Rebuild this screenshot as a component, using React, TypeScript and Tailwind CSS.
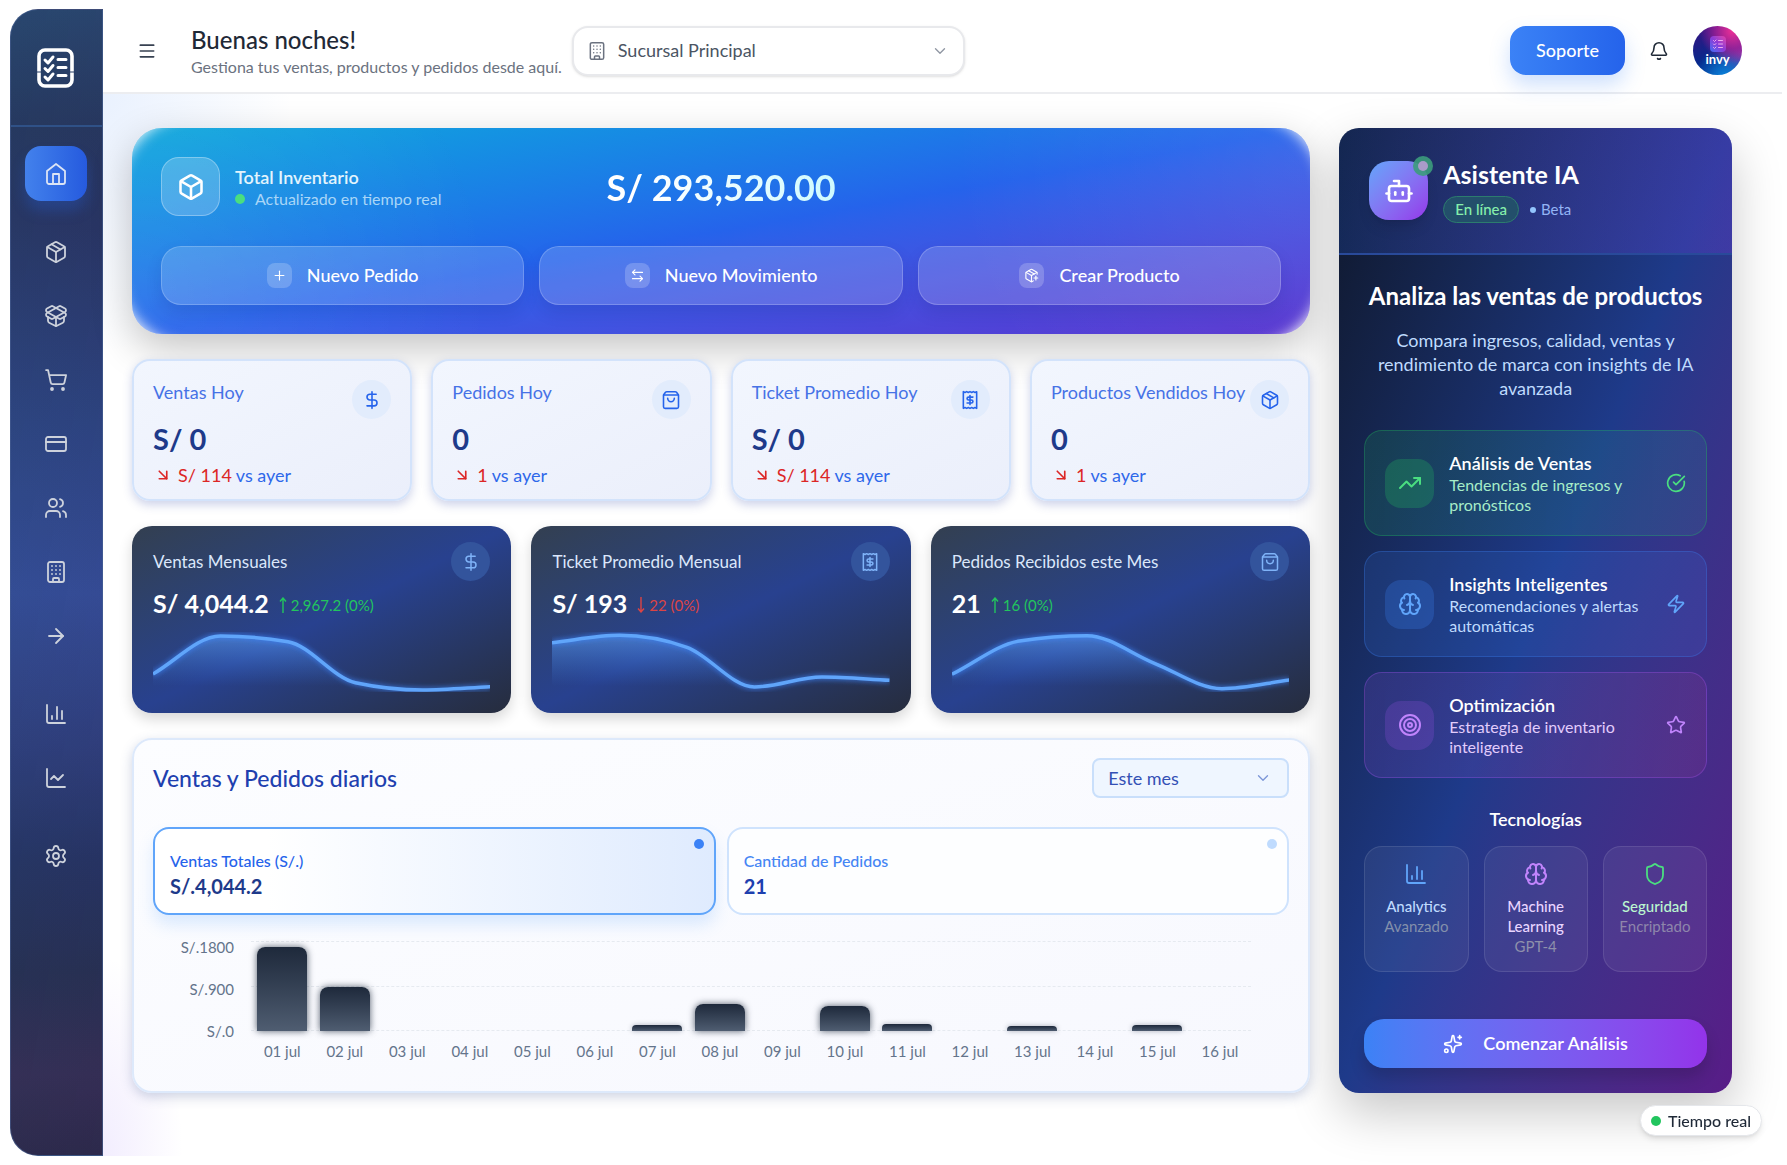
import React, { useState } from 'react';
import {
  ArrowDownRight, ArrowLeftRight, ArrowRight, Bell, Bot, Box, Brain, Building, ChartColumn, ChartLine,
  ChevronDown, CircleCheckBig, CreditCard, DollarSign, Menu, Package, PackageOpen, PackagePlus, Plus,
  Settings, Shield, ShoppingBag, ShoppingCart, Sparkles, Star, Target, TrendingUp, Users, Zap,
} from 'lucide-react';

type Icon = React.ComponentType<{ className?: string; strokeWidth?: number }>;

function HomeIcon({ className = '', strokeWidth = 2 }: { className?: string; strokeWidth?: number }) {
  return (
    <svg viewBox="0 0 24 24" className={className} fill="none" stroke="currentColor" strokeWidth={strokeWidth} strokeLinecap="round" strokeLinejoin="round">
      <path d="m3 9 9-7 9 7v11a2 2 0 0 1-2 2H5a2 2 0 0 1-2-2z" />
      <path d="M9 22V12h6v10" />
    </svg>
  );
}

function ReceiptIcon({ className = '', strokeWidth = 2 }: { className?: string; strokeWidth?: number }) {
  return (
    <svg viewBox="0 0 24 24" className={className} fill="none" stroke="currentColor" strokeWidth={strokeWidth} strokeLinecap="round" strokeLinejoin="round">
      <path d="M4 2v20l2-1 2 1 2-1 2 1 2-1 2 1 2-1 2 1V2l-2 1-2-1-2 1-2-1-2 1-2-1-2 1z" />
      <path d="M15.5 8.500h-5a2 1.700 0 0 0 0 3.500h3a2 1.700 0 0 1 0 3.500h-5" />
      <path d="M12 6.500v11" />
    </svg>
  );
}

function Checklist({ className = '' }: { className?: string }) {
  return (
    <svg viewBox="0 0 37 40" className={className} fill="none" stroke="currentColor" strokeLinecap="round" strokeLinejoin="round">
      <path d="M2 23.500V8a6 6 0 0 1 6-6h21a6 6 0 0 1 6 6v15.500M2 24.500v7.500a6 6 0 0 0 6 6h21a6 6 0 0 0 6-6v-7.500" strokeWidth="3.600" strokeLinecap="butt" />
      <path d="m8 12 3 3 5-6M8 20.500l3 3 5-6M8 29l3 3 5-6" strokeWidth="3" />
      <path d="M21 11.500h8M21 19.500h8M21 27.500h8" strokeWidth="3" />
    </svg>
  );
}

const navGroups: { label: string; icon: Icon }[][] = [
  [{ label: 'Inicio', icon: HomeIcon }],
  [
    { label: 'Productos', icon: Package },
    { label: 'Inventario', icon: PackageOpen },
    { label: 'Ventas', icon: ShoppingCart },
    { label: 'Pagos', icon: CreditCard },
    { label: 'Clientes', icon: Users },
    { label: 'Sucursales', icon: Building },
    { label: 'Movimientos', icon: ArrowRight },
  ],
  [
    { label: 'Reportes', icon: ChartColumn },
    { label: 'Tendencias', icon: ChartLine },
  ],
  [{ label: 'Ajustes', icon: Settings }],
];

function Sidebar() {
  return (
    <aside className="flex w-[93px] shrink-0 flex-col rounded-l-[28px] border border-[#4a6394]/60 bg-[linear-gradient(100deg,rgba(40,90,130,0.15),rgba(50,30,110,0.10)),linear-gradient(180deg,#29436b_0%,#26345a_10%,#28325f_18%,#2d4380_36%,#354d98_51%,#2f3f7c_64%,#253461_74%,#26304f_84%,#352f52_93%,#2c2a47_100%)]">
      <div className="flex h-[117px] items-center justify-center border-b-2 border-[#2f5187] pr-[2px]">
        <Checklist className="h-10 w-[37px] text-white" />
      </div>
      <nav className="flex flex-col gap-[23px] pt-[19px] pr-[2px]">
        {navGroups.map((group, g) => (
          <div key={g} className="flex flex-col items-center gap-[9px]">
            {group.map(({ label, icon: I }) => (
              <a
                key={label}
                href="#"
                aria-label={label}
                className={
                  label === 'Inicio'
                    ? 'flex h-[55px] w-[62px] items-center justify-center rounded-2xl bg-linear-to-r from-[#4381ec] to-[#265ade] text-[#dbe4f5] shadow-[0_10px_14px_rgba(37,99,235,0.28)]'
                    : 'flex h-[55px] w-[62px] items-center justify-center rounded-2xl text-[#cdd2dc]'
                }
              >
                <I className="size-6" strokeWidth={1.8} />
              </a>
            ))}
          </div>
        ))}
      </nav>
    </aside>
  );
}

function Header() {
  return (
    <header className="flex h-[85px] items-center border-b-2 border-[#ecedf0] bg-white">
      <button aria-label="Abrir menú" className="ml-[34px] flex size-5 items-center justify-center text-[#374151]">
        <Menu className="size-5" strokeWidth={2} />
      </button>
      <div className="ml-[34px] whitespace-nowrap">
        <h1 className="text-[24px] leading-[30px] font-medium text-[#1f2937]">Buenas noches!</h1>
        <p className="mt-[2px] text-[16px] leading-5 text-[#6b7280]">Gestiona tus ventas, productos y pedidos desde aquí.</p>
      </div>
      <div className="relative ml-[10px] w-[393px]">
        <Building className="pointer-events-none absolute top-[15px] left-[15px] size-5 text-[#6b7280]" strokeWidth={1.8} />
        <select aria-label="Sucursal" className="h-[50px] w-full appearance-none rounded-2xl border-2 border-[#e8e9ec] bg-white pr-11 pl-11 text-[18px] text-[#4b5563] shadow-sm">
          <option>Sucursal Principal</option>
        </select>
        <ChevronDown className="pointer-events-none absolute top-4 right-4 size-[18px] text-[#9097a3]" strokeWidth={1.8} />
      </div>
      <div className="mr-10 ml-auto flex items-center">
        <button className="h-[49px] rounded-2xl bg-linear-to-r from-[#3b82f6] to-[#2563eb] px-[26px] text-[18px] font-medium text-white shadow-[0_10px_20px_rgba(59,130,246,0.25)]">Soporte</button>
        <button aria-label="Notificaciones" className="ml-6 text-[#1f2937]">
          <Bell className="size-5" strokeWidth={1.9} />
        </button>
        <button aria-label="Cuenta invy" className="ml-6 flex size-[49px] flex-col items-center justify-center rounded-full bg-[radial-gradient(circle_at_80%_10%,#ec2f97_0%,rgba(160,30,150,0.8)_30%,transparent_55%),radial-gradient(circle_at_65%_105%,#0b86dd_0%,transparent_50%),radial-gradient(circle_at_100%_55%,#8b3cb0_0%,transparent_45%),linear-gradient(160deg,#3a1180,#062a8c_60%,#063a9a)]">
          <span className="flex size-4 items-center justify-center rounded bg-linear-to-tr from-[#2f6bf5] via-[#8a3ad8] to-[#e63aa8]">
            <svg viewBox="0 0 12 12" className="size-3" fill="none" stroke="#f0a8ee" strokeLinecap="round" aria-hidden="true">
              <path d="m1.500 2.500 1 1L4 2M1.500 6l1 1L4 5.500M1.500 9.500l1 1L4 9M6.500 2.500h4M6.500 6h4M6.500 9.500h4" />
            </svg>
          </span>
          <span className="text-[13px] leading-[14px] font-bold text-white">invy</span>
        </button>
      </div>
    </header>
  );
}

const heroActions: { label: string; icon: Icon }[] = [
  { label: 'Nuevo Pedido', icon: Plus },
  { label: 'Nuevo Movimiento', icon: ArrowLeftRight },
  { label: 'Crear Producto', icon: PackagePlus },
];

function Hero() {
  return (
    <section className="rounded-[30px] shadow-[0_14px_40px_rgba(0,0,0,0.24)]">
      <div className="relative overflow-hidden rounded-[30px] bg-linear-to-br from-[#12a8dc] via-[#2563eb] to-[#5733cf] p-[29px]">
        <div className="pointer-events-none absolute inset-0 bg-[radial-gradient(circle_at_0_80%,rgba(255,255,255,0.08),transparent_30%),radial-gradient(circle_at_100%_10%,rgba(255,255,255,0.07),transparent_30%)]" />
        <div className="pointer-events-none absolute -inset-4 rounded-[82px] shadow-[inset_0_0_14px_2px_rgba(255,255,255,0.9)]" />
        <div className="relative grid grid-cols-3 items-center gap-[15px]">
          <div className="flex items-center gap-[15px]">
            <div className="flex size-[59px] shrink-0 items-center justify-center rounded-[18px] border border-white/30 bg-white/20 text-white">
              <Box className="size-7" strokeWidth={2.2} />
            </div>
            <div className="whitespace-nowrap">
              <h2 className="text-[18px] leading-6 font-semibold text-[#e3f4fd]">Total Inventario</h2>
              <p className="flex items-center gap-[10px] text-[16px] leading-5 text-[#a9d6f7]">
                <span className="size-[10px] rounded-full bg-[#4ade80]" />
                Actualizado en tiempo real
              </p>
            </div>
          </div>
          <p className="bg-linear-to-r from-white from-30% to-[#cffafe] to-80% bg-clip-text text-center text-[36px] leading-[48px] font-bold whitespace-nowrap text-transparent">
            S/ 293,520.00
          </p>
        </div>
        <div className="relative mt-[30px] grid grid-cols-3 gap-[15px]">
          {heroActions.map(({ label, icon: I }) => (
            <button key={label} className="flex h-[59px] items-center justify-center gap-[15px] rounded-[20px] border border-white/20 bg-white/16 text-[18px] font-medium text-white shadow-[0_8px_16px_rgba(20,30,120,0.14)]">
              <span className="flex size-[25px] items-center justify-center rounded-lg bg-white/20">
                <I className="size-[15px]" strokeWidth={1.8} />
              </span>
              {label}
            </button>
          ))}
        </div>
      </div>
    </section>
  );
}

const todayStats: { title: string; value: string; delta: string; icon: Icon }[] = [
  { title: 'Ventas Hoy', value: 'S/ 0', delta: 'S/ 114', icon: DollarSign },
  { title: 'Pedidos Hoy', value: '0', delta: '1', icon: ShoppingBag },
  { title: 'Ticket Promedio Hoy', value: 'S/ 0', delta: 'S/ 114', icon: ReceiptIcon },
  { title: 'Productos Vendidos Hoy', value: '0', delta: '1', icon: Package },
];

function TodayStats() {
  return (
    <section className="relative grid grid-cols-4 gap-[19px]">
      {todayStats.map(({ title, value, delta, icon: I }) => (
        <article key={title} className="rounded-[18px] border-2 border-[#d3e3fb] bg-linear-to-br from-[#f2f6fe] to-[#ebeffb] px-[19px] pt-[19px] pb-3 shadow-[0_4px_10px_rgba(60,80,170,0.25)]">
          <div className="flex items-start justify-between">
            <h3 className="text-[18px] leading-6 whitespace-nowrap text-[#4672e6]">{title}</h3>
            <span className="flex size-[39px] shrink-0 items-center justify-center rounded-full bg-[#e2ecfc] text-[#2563eb]">
              <I className="size-5" strokeWidth={1.9} />
            </span>
          </div>
          <p className="mt-[2px] text-[29px] leading-9 font-bold text-[#1e3a8a]">{value}</p>
          <p className="mt-[6px] flex items-center text-[18px] leading-6 text-[#2f68ea]">
            <ArrowDownRight className="mr-[6px] ml-[1px] size-[18px] text-[#dc2626]" strokeWidth={2.2} />
            <span className="mr-1 text-[#dc2626]">{delta}</span>
            vs ayer
          </p>
        </article>
      ))}
    </section>
  );
}

function monotonePath(values: number[], width: number) {
  const n = values.length;
  const h = width / (n - 1);
  const slopes = values.slice(1).map((v, i) => (v - values[i]) / h);
  const tangents = values.map((_, i) => {
    if (i === 0) return slopes[0];
    if (i === n - 1) return slopes[n - 2];
    const a = slopes[i - 1];
    const b = slopes[i];
    if (a * b <= 0) return 0;
    return Math.sign(a) * Math.min(Math.abs(a), Math.abs(b), Math.abs(a + b) / 4) * 2;
  });
  let d = `M0 ${values[0]}`;
  for (let i = 0; i < n - 1; i++) {
    const x = i * h;
    d += ` C${x + h / 3} ${values[i] + (tangents[i] * h) / 3} ${x + (2 * h) / 3} ${values[i + 1] - (tangents[i + 1] * h) / 3} ${x + h} ${values[i + 1]}`;
  }
  return d;
}

function Sparkline({ id, values }: { id: string; values: number[] }) {
  const d = monotonePath(values, 338);
  return (
    <svg viewBox="0 0 338 60" preserveAspectRatio="none" className="mt-3 h-[60px] w-full overflow-hidden" aria-hidden="true">
      <defs>
        <linearGradient id={`${id}-fill`} x1="0" y1="0" x2="0" y2="60" gradientUnits="userSpaceOnUse">
          <stop offset="0" stopColor="#60a5fa" stopOpacity="0.6" />
          <stop offset="0.9" stopColor="#3b82f6" stopOpacity="0" />
        </linearGradient>
        <filter id={`${id}-glow`} x="-5%" y="-30%" width="110%" height="160%">
          <feGaussianBlur stdDeviation="2.500" />
        </filter>
      </defs>
      <path d={`${d} L338 60 L0 60 Z`} fill={`url(#${id}-fill)`} />
      <path d={d} fill="none" stroke="#3b82f6" strokeWidth="5" strokeOpacity="0.7" filter={`url(#${id}-glow)`} />
      <path d={d} fill="none" stroke="#60a5fa" strokeWidth="3.500" />
    </svg>
  );
}

const monthly: { title: string; value: string; up: boolean; delta: string; icon: Icon; points: number[] }[] = [
  { title: 'Ventas Mensuales', value: 'S/ 4,044.2', up: true, delta: '2,967.2 (0%)', icon: DollarSign, points: [42, 4, 9.7, 50.7, 58, 54.7] },
  { title: 'Ticket Promedio Mensual', value: 'S/ 193', up: false, delta: '22 (0%)', icon: ReceiptIcon, points: [10.7, 3.3, 15.3, 55, 45, 48.3] },
  { title: 'Pedidos Recibidos este Mes', value: '21', up: true, delta: '16 (0%)', icon: ShoppingBag, points: [42.3, 9, 3.7, 31.3, 56.7, 48] },
];

function MonthlyStats() {
  return (
    <section className="relative grid grid-cols-3 gap-[20px]">
      {monthly.map(({ title, value, up, delta, icon: I, points }, i) => (
        <article key={title} className="rounded-[20px] bg-linear-to-br from-[#333f50] via-[#28418f] to-[#262c3d] px-[21px] pt-4 pb-[21px] shadow-[0_6px_14px_rgba(0,0,0,0.16)]">
          <div className="flex items-center justify-between">
            <h3 className="text-[17px] leading-6 whitespace-nowrap text-[#dbe7fb]">{title}</h3>
            <span className="flex size-[39px] items-center justify-center rounded-full bg-[#33549c] text-[#7fb3f8]">
              <I className="size-5" strokeWidth={1.8} />
            </span>
          </div>
          <div className="mt-[5px] flex h-[34px] items-center gap-[10px]">
            <span className="text-[25px] leading-8 font-bold text-white">{value}</span>
            <span className={up ? 'flex items-center gap-1 pt-1 text-[15px] leading-6 text-[#22c55e]' : 'flex items-center gap-1 pt-1 text-[15px] leading-6 text-[#dc4444]'}>
              <svg viewBox="0 0 8 16" className="h-4 w-2" fill="none" stroke="currentColor" strokeWidth="1.400" aria-hidden="true">
                <path d={up ? 'M4 16V1M1 4.500 4 1l3 3.500' : 'M4 0v15M1 11.500 4 15l3-3.500'} />
              </svg>
              {delta}
            </span>
          </div>
          <Sparkline id={`spark-${i}`} values={points} />
        </article>
      ))}
    </section>
  );
}

const bars = [84, 44, 0, 0, 0, 0, 6, 27, 0, 25, 7, 0, 5, 0, 6, 0];

function DailyChart() {
  const [tab, setTab] = useState(0);
  const tabs = [
    { label: 'Ventas Totales (S/.)', value: 'S/.4,044.2' },
    { label: 'Cantidad de Pedidos', value: '21' },
  ];
  return (
    <section className="relative flex-1 rounded-[20px] border-2 border-[#dde9fb] bg-linear-to-br from-[#fcfdff] to-[#f7f8fe] px-[19px] pt-[18px] pb-[30px] shadow-[0_4px_12px_rgba(60,80,140,0.25)]">
      <div className="flex items-center justify-between">
        <h2 className="text-[23px] leading-[38px] font-medium text-[#1e40af]">Ventas y Pedidos diarios</h2>
        <div className="relative w-[197px]">
          <select aria-label="Periodo" className="h-10 w-full appearance-none rounded-lg border-2 border-[#c9dffb] bg-[#eff6ff] px-[14px] text-[18px] text-[#3350b5]">
            <option>Este mes</option>
          </select>
          <ChevronDown className="pointer-events-none absolute top-[11px] right-[17px] size-[18px] text-[#7d97d8]" strokeWidth={1.8} />
        </div>
      </div>
      <div className="mt-[29px] grid grid-cols-2 gap-[11px]">
        {tabs.map((t, i) => (
          <button
            key={t.label}
            onClick={() => setTab(i)}
            className={
              i === tab
                ? 'relative h-[88px] rounded-2xl border-2 border-[#60a5fa] bg-linear-to-r from-white from-20% to-[#dfebfe] px-[15px] pt-[5px] text-left shadow-[0_10px_16px_rgba(96,165,250,0.20)]'
                : 'relative h-[88px] rounded-2xl border-2 border-[#cfe3fd] bg-[#fdfeff] px-[15px] pt-[5px] text-left'
            }
          >
            <span className={i === tab ? 'absolute top-[10px] right-[10px] size-[10px] rounded-full bg-[#3b82f6]' : 'absolute top-[10px] right-[10px] size-[10px] rounded-full bg-[#bfdbfe]'} />
            <span className={i === tab ? 'block text-[16px] leading-6 font-medium text-[#2563eb]' : 'block text-[16px] leading-6 font-medium text-[#4585f4]'}>{t.label}</span>
            <span className={i === tab ? 'block text-[20px] leading-[26px] font-bold text-[#1e3a8a]' : 'block text-[20px] leading-[26px] font-bold text-[#1e40af]'}>{t.value}</span>
          </button>
        ))}
      </div>
      <div className="mt-[22px] flex pr-[38px] text-[15px] leading-5 text-[#64748b]">
        <div className="flex h-[104px] w-[81px] shrink-0 flex-col justify-between text-right">
          <span>S/.1800</span>
          <span>S/.900</span>
          <span>S/.0</span>
        </div>
        <div className="ml-[17px] flex-1 pt-1">
          <div className="relative h-[90px]">
            <div className="absolute inset-0 flex flex-col justify-between">
              <i className="block border-t border-dashed border-[#e6eaf0]" />
              <i className="block border-t border-dashed border-[#e6eaf0]" />
              <i className="block border-t border-dashed border-[#e6eaf0]" />
            </div>
            <div className="relative flex h-full items-end">
              {bars.map((h, i) => (
                <div key={i} className="flex flex-1 justify-center">
                  {h > 0 && (
                    <div
                      className={
                        h > 20
                          ? 'w-4/5 rounded-t-lg bg-linear-to-b from-[#1e293b] to-[#4f5d71] shadow-[0_0_7px_rgba(30,41,59,0.75)]'
                          : 'w-4/5 rounded-t bg-linear-to-b from-[#1e293b] to-[#4f5d71] shadow-[0_0_5px_rgba(30,41,59,0.35)]'
                      }
                      style={{ height: h }}
                    />
                  )}
                </div>
              ))}
            </div>
          </div>
          <div className="mt-[10px] flex text-center">
            {bars.map((_, i) => (
              <span key={i} className="flex-1 whitespace-nowrap">{String(i + 1).padStart(2, '0')} jul</span>
            ))}
          </div>
        </div>
      </div>
    </section>
  );
}

function Assistant() {
  return (
    <aside className="flex flex-col rounded-[20px] bg-linear-to-br from-[#0f172a] via-[#1e3a8a] to-[#581c87] shadow-[0_20px_50px_rgba(0,0,0,0.22)]">
      <div className="flex h-[127px] items-center gap-[15px] rounded-t-[20px] border-b-2 border-[#294a9a] bg-linear-to-r from-[#2563eb]/20 to-[#7040e0]/30 px-[30px]">
        <div className="relative flex size-[59px] shrink-0 items-center justify-center rounded-[20px] bg-linear-to-br from-[#60a5fa] to-[#9333ea] text-white shadow-lg">
          <Bot className="size-[30px]" strokeWidth={2.1} />
          <span className="absolute -top-[5px] -right-[5px] flex size-5 items-center justify-center rounded-full bg-[#3c9c7c]/90">
            <span className="size-[10px] rounded-full bg-[#a99bc9]" />
          </span>
        </div>
        <div>
          <h2 className="text-[25px] leading-8 font-bold whitespace-nowrap text-white">Asistente IA</h2>
          <div className="mt-[6px] flex items-center text-[15px]">
            <span className="rounded-full border border-[#2c7c6e] bg-[#234f6b] px-[11px] leading-[25px] font-medium text-[#86efac]">En línea</span>
            <span className="ml-[11px] flex items-center gap-[5px] text-[#93b4f5]">
              <span className="size-[6px] rounded-full bg-[#93c5fd]" />
              Beta
            </span>
          </div>
        </div>
      </div>
      <div className="flex flex-1 flex-col px-[25px] pt-[25px] pb-[25px]">
        <h3 className="text-center text-[24px] leading-8 font-bold whitespace-nowrap text-white">Analiza las ventas de productos</h3>
        <p className="mt-4 text-center text-[18px] leading-6 text-[#bfdbfe]">
          Compara ingresos, calidad, ventas y<br />rendimiento de marca con insights de IA<br />avanzada
        </p>
        <div className="mt-[30px] flex flex-col gap-[15px]">
          <article className="flex items-center rounded-[18px] border border-[#22c55e]/30 bg-linear-to-r from-[#22c55e]/15 to-[#34d399]/10 p-5">
            <span className="flex size-[49px] shrink-0 items-center justify-center rounded-2xl bg-[#22c55e]/25 text-[#4ade80]"><TrendingUp className="size-6" /></span>
            <div className="ml-[15px] flex-1">
              <h4 className="text-[18px] leading-6 font-semibold text-white">Análisis de Ventas</h4>
              <p className="text-[16px] leading-5 text-[#a7edc8]">Tendencias de ingresos y<br />pronósticos</p>
            </div>
            <CircleCheckBig className="size-5 shrink-0 text-[#4ade80]" />
          </article>
          <article className="flex items-center rounded-[18px] border border-[#3b82f6]/30 bg-linear-to-r from-[#3b82f6]/15 to-[#3b82f6]/15 p-5">
            <span className="flex size-[49px] shrink-0 items-center justify-center rounded-2xl bg-[#3b82f6]/25 text-[#60a5fa]"><Brain className="size-6" /></span>
            <div className="ml-[15px] flex-1">
              <h4 className="text-[18px] leading-6 font-semibold text-white">Insights Inteligentes</h4>
              <p className="text-[16px] leading-5 whitespace-nowrap text-[#bfdbfe]">Recomendaciones y alertas<br />automáticas</p>
            </div>
            <Zap className="size-5 shrink-0 text-[#60a5fa]" />
          </article>
          <article className="flex items-center rounded-[18px] border border-[#a855f7]/30 bg-linear-to-r from-[#a855f7]/15 to-[#ec4899]/10 p-5">
            <span className="flex size-[49px] shrink-0 items-center justify-center rounded-2xl bg-[#a855f7]/20 text-[#c084fc]"><Target className="size-6" /></span>
            <div className="ml-[15px] flex-1">
              <h4 className="text-[18px] leading-6 font-semibold text-white">Optimización</h4>
              <p className="text-[16px] leading-5 text-[#e2ccfc]">Estrategia de inventario<br />inteligente</p>
            </div>
            <Star className="size-5 shrink-0 text-[#c084fc]" />
          </article>
        </div>
        <h4 className="mt-[29px] text-center text-[18px] leading-6 font-semibold text-white">Tecnologías</h4>
        <div className="mt-[15px] grid grid-cols-3 gap-[15px] text-center text-[15px] leading-5">
          <div className="flex flex-col items-center rounded-[18px] border border-white/10 bg-white/6 p-[15px]">
            <ChartColumn className="size-6 text-[#60a5fa]" strokeWidth={1.8} />
            <p className="mt-[10px] font-medium text-[#bfdbfe]">Analytics</p>
            <p className="text-[#8390ab]">Avanzado</p>
          </div>
          <div className="flex flex-col items-center rounded-[18px] border border-white/10 bg-white/6 p-[15px]">
            <Brain className="size-6 text-[#c084fc]" strokeWidth={2} />
            <p className="mt-[10px] font-medium text-[#e9d5ff]">Machine<br />Learning</p>
            <p className="text-[#8e90ab]">GPT-4</p>
          </div>
          <div className="flex flex-col items-center rounded-[18px] border border-white/10 bg-white/6 p-[15px]">
            <Shield className="size-6 text-[#4ade80]" strokeWidth={1.8} />
            <p className="mt-[10px] font-medium text-[#bbf7d0]">Seguridad</p>
            <p className="text-[#8e86ab]">Encriptado</p>
          </div>
        </div>
        <button className="mt-auto flex h-[49px] items-center justify-center gap-5 rounded-[20px] bg-linear-to-r from-[#3b82f6] to-[#9333ea] text-[18px] font-semibold text-white shadow-[0_10px_15px_rgba(0,0,0,0.15)]">
          <Sparkles className="size-5" />
          Comenzar Análisis
        </button>
      </div>
    </aside>
  );
}

export default function App() {
  return (
    <div className="flex min-h-screen bg-white pt-[9px] pr-[5px] pb-[9px] pl-[10px] font-[Lato,'Open_Sans',sans-serif]">
      <Sidebar />
      <div className="flex min-w-0 flex-1 flex-col">
        <Header />
        <main className="flex-1 bg-[radial-gradient(ellipse_190px_260px_at_0_0,rgba(59,130,246,0.11),transparent),radial-gradient(ellipse_80px_200px_at_0_100%,rgba(139,92,246,0.11),transparent)] pt-[34px] pr-[50px] pb-10 pl-[29px]">
          <div className="grid grid-cols-[3fr_1fr] gap-[29px]">
            <div className="flex min-w-0 flex-col gap-[25px]">
              <Hero />
              <TodayStats />
              <MonthlyStats />
              <DailyChart />
            </div>
            <Assistant />
          </div>
        </main>
      </div>
      <div className="fixed right-[25px] bottom-[29px] flex h-[31px] items-center gap-[7px] rounded-full border border-[#e5e7eb] bg-white px-[10px] text-[16px] font-medium text-[#1f2937] shadow-md">
        <span className="size-[10px] rounded-full bg-[#22c55e]" />
        Tiempo real
      </div>
    </div>
  );
}
